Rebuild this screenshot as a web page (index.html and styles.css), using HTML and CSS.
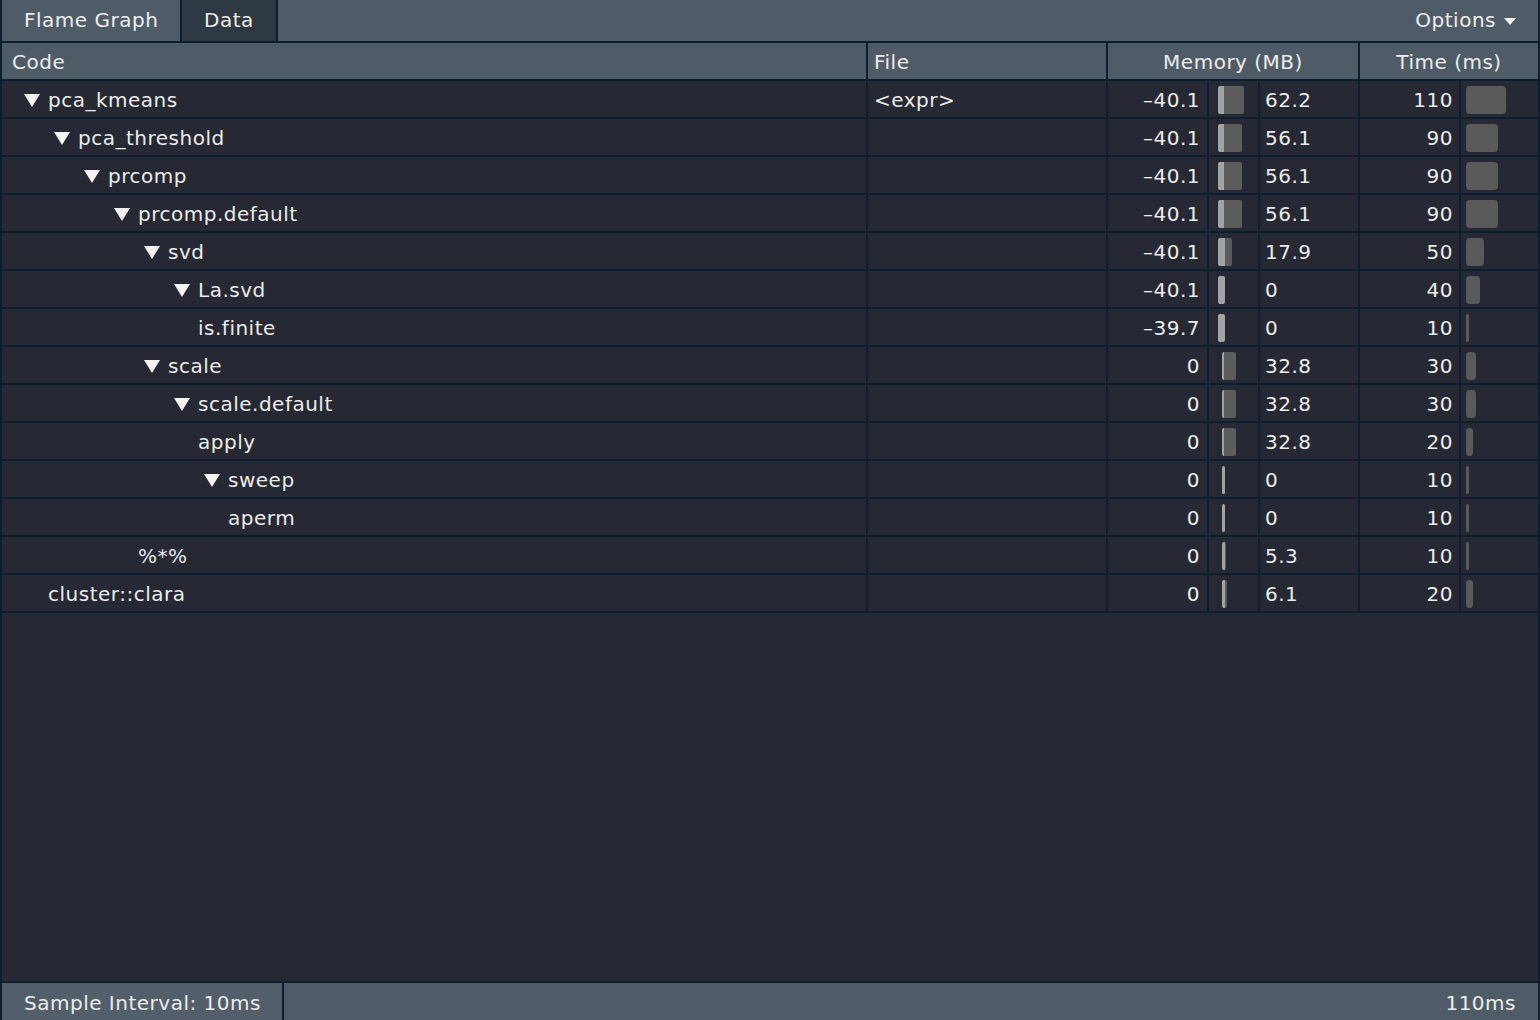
FILE: index.html
```html
<!DOCTYPE html>
<html>
<head>
<meta charset="utf-8">
<link rel="stylesheet" href="styles.css">
</head>
<body>
<div class="app">
  <div class="topbar">
    <div class="tab">Flame Graph</div>
    <div class="tab active">Data</div>
    <div class="spacer"></div>
    <div class="options">Options <svg class="caret" width="12" height="7" viewBox="0 0 12 7"><polygon points="0,0 12,0 6,7" fill="#f0f0f0"/></svg></div>
  </div>
  <div class="table">
    <div class="hrow">
      <div class="hc c-code">Code</div>
      <div class="hc c-file">File</div>
      <div class="hc c-mem">Memory (MB)</div>
      <div class="hc c-time">Time (ms)</div>
    </div>

    <div class="row">
      <div class="cell c-code l0"><span class="tog"><svg width="16" height="13" viewBox="0 0 16 13"><polygon points="0,0 16,0 8,13" fill="#f2f2f2"/></svg></span>pca_kmeans</div>
      <div class="cell c-file">&lt;expr&gt;</div>
      <div class="cell c-mneg">–40.1</div>
      <div class="cell c-mbar"><span class="mb" style="margin-left:9px"><i class="lt" style="width:6px"></i><i class="dk" style="width:20px"></i></span></div>
      <div class="cell c-mpos">62.2</div>
      <div class="cell c-tval">110</div>
      <div class="cell c-tbar"><span class="tb" style="width:40px"></span></div>
    </div>
    <div class="row">
      <div class="cell c-code l1"><span class="tog"><svg width="16" height="13" viewBox="0 0 16 13"><polygon points="0,0 16,0 8,13" fill="#f2f2f2"/></svg></span>pca_threshold</div>
      <div class="cell c-file"></div>
      <div class="cell c-mneg">–40.1</div>
      <div class="cell c-mbar"><span class="mb" style="margin-left:9px"><i class="lt" style="width:6px"></i><i class="dk" style="width:18px"></i></span></div>
      <div class="cell c-mpos">56.1</div>
      <div class="cell c-tval">90</div>
      <div class="cell c-tbar"><span class="tb" style="width:32px"></span></div>
    </div>
    <div class="row">
      <div class="cell c-code l2"><span class="tog"><svg width="16" height="13" viewBox="0 0 16 13"><polygon points="0,0 16,0 8,13" fill="#f2f2f2"/></svg></span>prcomp</div>
      <div class="cell c-file"></div>
      <div class="cell c-mneg">–40.1</div>
      <div class="cell c-mbar"><span class="mb" style="margin-left:9px"><i class="lt" style="width:6px"></i><i class="dk" style="width:18px"></i></span></div>
      <div class="cell c-mpos">56.1</div>
      <div class="cell c-tval">90</div>
      <div class="cell c-tbar"><span class="tb" style="width:32px"></span></div>
    </div>
    <div class="row">
      <div class="cell c-code l3"><span class="tog"><svg width="16" height="13" viewBox="0 0 16 13"><polygon points="0,0 16,0 8,13" fill="#f2f2f2"/></svg></span>prcomp.default</div>
      <div class="cell c-file"></div>
      <div class="cell c-mneg">–40.1</div>
      <div class="cell c-mbar"><span class="mb" style="margin-left:9px"><i class="lt" style="width:6px"></i><i class="dk" style="width:18px"></i></span></div>
      <div class="cell c-mpos">56.1</div>
      <div class="cell c-tval">90</div>
      <div class="cell c-tbar"><span class="tb" style="width:32px"></span></div>
    </div>
    <div class="row">
      <div class="cell c-code l4"><span class="tog"><svg width="16" height="13" viewBox="0 0 16 13"><polygon points="0,0 16,0 8,13" fill="#f2f2f2"/></svg></span>svd</div>
      <div class="cell c-file"></div>
      <div class="cell c-mneg">–40.1</div>
      <div class="cell c-mbar"><span class="mb" style="margin-left:9px"><i class="lt" style="width:7px"></i><i class="dk" style="width:7px"></i></span></div>
      <div class="cell c-mpos">17.9</div>
      <div class="cell c-tval">50</div>
      <div class="cell c-tbar"><span class="tb" style="width:18px"></span></div>
    </div>
    <div class="row">
      <div class="cell c-code l5"><span class="tog"><svg width="16" height="13" viewBox="0 0 16 13"><polygon points="0,0 16,0 8,13" fill="#f2f2f2"/></svg></span>La.svd</div>
      <div class="cell c-file"></div>
      <div class="cell c-mneg">–40.1</div>
      <div class="cell c-mbar"><span class="mb" style="margin-left:9px"><i class="lt" style="width:7px"></i></span></div>
      <div class="cell c-mpos">0</div>
      <div class="cell c-tval">40</div>
      <div class="cell c-tbar"><span class="tb" style="width:14px"></span></div>
    </div>
    <div class="row">
      <div class="cell c-code l6 leaf">is.finite</div>
      <div class="cell c-file"></div>
      <div class="cell c-mneg">–39.7</div>
      <div class="cell c-mbar"><span class="mb" style="margin-left:9px"><i class="lt" style="width:7px"></i></span></div>
      <div class="cell c-mpos">0</div>
      <div class="cell c-tval">10</div>
      <div class="cell c-tbar"><span class="tb" style="width:3px"></span></div>
    </div>
    <div class="row">
      <div class="cell c-code l4"><span class="tog"><svg width="16" height="13" viewBox="0 0 16 13"><polygon points="0,0 16,0 8,13" fill="#f2f2f2"/></svg></span>scale</div>
      <div class="cell c-file"></div>
      <div class="cell c-mneg">0</div>
      <div class="cell c-mbar"><span class="mb" style="margin-left:13px"><i class="lt" style="width:2px"></i><i class="dk" style="width:12px"></i></span></div>
      <div class="cell c-mpos">32.8</div>
      <div class="cell c-tval">30</div>
      <div class="cell c-tbar"><span class="tb" style="width:10px"></span></div>
    </div>
    <div class="row">
      <div class="cell c-code l5"><span class="tog"><svg width="16" height="13" viewBox="0 0 16 13"><polygon points="0,0 16,0 8,13" fill="#f2f2f2"/></svg></span>scale.default</div>
      <div class="cell c-file"></div>
      <div class="cell c-mneg">0</div>
      <div class="cell c-mbar"><span class="mb" style="margin-left:13px"><i class="lt" style="width:2px"></i><i class="dk" style="width:12px"></i></span></div>
      <div class="cell c-mpos">32.8</div>
      <div class="cell c-tval">30</div>
      <div class="cell c-tbar"><span class="tb" style="width:10px"></span></div>
    </div>
    <div class="row">
      <div class="cell c-code l6 leaf">apply</div>
      <div class="cell c-file"></div>
      <div class="cell c-mneg">0</div>
      <div class="cell c-mbar"><span class="mb" style="margin-left:13px"><i class="lt" style="width:2px"></i><i class="dk" style="width:12px"></i></span></div>
      <div class="cell c-mpos">32.8</div>
      <div class="cell c-tval">20</div>
      <div class="cell c-tbar"><span class="tb" style="width:7px"></span></div>
    </div>
    <div class="row">
      <div class="cell c-code l6"><span class="tog"><svg width="16" height="13" viewBox="0 0 16 13"><polygon points="0,0 16,0 8,13" fill="#f2f2f2"/></svg></span>sweep</div>
      <div class="cell c-file"></div>
      <div class="cell c-mneg">0</div>
      <div class="cell c-mbar"><span class="mb" style="margin-left:13px"><i class="lt" style="width:3px"></i></span></div>
      <div class="cell c-mpos">0</div>
      <div class="cell c-tval">10</div>
      <div class="cell c-tbar"><span class="tb" style="width:3px"></span></div>
    </div>
    <div class="row">
      <div class="cell c-code l7 leaf">aperm</div>
      <div class="cell c-file"></div>
      <div class="cell c-mneg">0</div>
      <div class="cell c-mbar"><span class="mb" style="margin-left:13px"><i class="lt" style="width:3px"></i></span></div>
      <div class="cell c-mpos">0</div>
      <div class="cell c-tval">10</div>
      <div class="cell c-tbar"><span class="tb" style="width:3px"></span></div>
    </div>
    <div class="row">
      <div class="cell c-code l4 leaf">%*%</div>
      <div class="cell c-file"></div>
      <div class="cell c-mneg">0</div>
      <div class="cell c-mbar"><span class="mb" style="margin-left:13px"><i class="lt" style="width:3px"></i><i class="dk" style="width:1px"></i></span></div>
      <div class="cell c-mpos">5.3</div>
      <div class="cell c-tval">10</div>
      <div class="cell c-tbar"><span class="tb" style="width:3px"></span></div>
    </div>
    <div class="row">
      <div class="cell c-code l1 leaf">cluster::clara</div>
      <div class="cell c-file"></div>
      <div class="cell c-mneg">0</div>
      <div class="cell c-mbar"><span class="mb" style="margin-left:13px"><i class="lt" style="width:3px"></i><i class="dk" style="width:2px"></i></span></div>
      <div class="cell c-mpos">6.1</div>
      <div class="cell c-tval">20</div>
      <div class="cell c-tbar"><span class="tb" style="width:7px"></span></div>
    </div>
  </div>
  <div class="status">
    <div class="interval">Sample Interval: 10ms</div>
    <div class="spacer"></div>
    <div class="total">110ms</div>
  </div>
</div>
</body>
</html>
```
FILE: styles.css
```css
html, body {
  margin: 0;
  padding: 0;
}
body {
  width: 1540px;
  height: 1020px;
  overflow: hidden;
  background: #262933;
  font-family: "DejaVu Sans", "Liberation Sans", sans-serif;
  font-size: 20px;
  letter-spacing: 0.5px;
  color: #ececec;
}
.app {
  width: 1540px;
  height: 1020px;
  box-sizing: border-box;
  border-left: 2px solid #0d1f2e;
  border-right: 2px solid #0d1f2e;
  display: flex;
  flex-direction: column;
  background: #262933;
}
.topbar {
  height: 41px;
  flex: none;
  display: flex;
  align-items: stretch;
  background: #4f5c68;
  border-bottom: 2px solid #0d1f2e;
}
.tab {
  display: flex;
  align-items: center;
  padding: 0 0 1px 22px;
  border-right: 2px solid #0d1f2e;
  color: #eeeeee;
  box-sizing: border-box;
}
.tab:first-child {
  width: 180px;
}
.tab.active {
  background: #2e3944;
  width: 96px;
  justify-content: center;
  padding: 0 0 1px 0;
}
.spacer {
  flex: 1;
}
.options {
  display: flex;
  align-items: center;
  padding-right: 22px;
  padding-bottom: 1px;
  color: #eeeeee;
}
.caret {
  margin-left: 8px;
  margin-top: 2px;
}
.table {
  flex: 1;
  display: flex;
  flex-direction: column;
}
.hrow, .row {
  display: flex;
  height: 36px;
  border-bottom: 2px solid #0d1f2e;
  flex: none;
}
.hrow {
  background: #4f5c68;
}
.hc, .cell {
  display: flex;
  align-items: center;
  box-sizing: border-box;
  border-right: 2px solid #0d1f2e;
  white-space: nowrap;
  overflow: hidden;
  padding-top: 2px;
}
.hc:last-child, .cell:last-child {
  border-right: none;
}
.c-code { width: 866px; padding-left: 10px; }
.c-file { width: 240px; padding-left: 6px; }
.c-mem { width: 252px; justify-content: center; }
.c-time { width: 178px; justify-content: center; }
.c-mneg { width: 101px; justify-content: flex-end; padding-right: 7px; }
.c-mbar { width: 51px; padding-top: 0; }
.c-mpos { width: 100px; padding-left: 5px; }
.c-tval { width: 101px; justify-content: flex-end; padding-right: 6px; }
.c-tbar { width: 77px; padding-left: 5px; padding-top: 0; }

.l0 { padding-left: 10px; }
.l1 { padding-left: 40px; }
.l2 { padding-left: 70px; }
.l3 { padding-left: 100px; }
.l4 { padding-left: 130px; }
.l5 { padding-left: 160px; }
.l6 { padding-left: 190px; }
.l7 { padding-left: 220px; }
.leaf { text-indent: 6px; }
.tog {
  display: inline-flex;
  margin-left: 12px;
  margin-right: 8px;
}
.mb {
  display: flex;
  height: 28px;
  border-radius: 2px;
  overflow: hidden;
  margin-top: 1px;
}
.mb i {
  display: block;
  height: 100%;
}
.lt { background: #a3a3a3; }
.dk { background: #5c5c5c; }
.tb {
  display: block;
  height: 28px;
  background: #5a5a5a;
  border-radius: 4px;
  margin-top: 1px;
}
.status {
  height: 37px;
  flex: none;
  display: flex;
  align-items: center;
  background: #4f5c68;
  border-top: 2px solid #0d1f2e;
}
.interval {
  height: 100%;
  display: flex;
  align-items: center;
  width: 282px;
  box-sizing: border-box;
  padding-left: 22px;
  padding-top: 3px;
  border-right: 2px solid #0d1f2e;
  background: #525f6a;
}
.total {
  padding-right: 22px;
  padding-top: 3px;
}
```
